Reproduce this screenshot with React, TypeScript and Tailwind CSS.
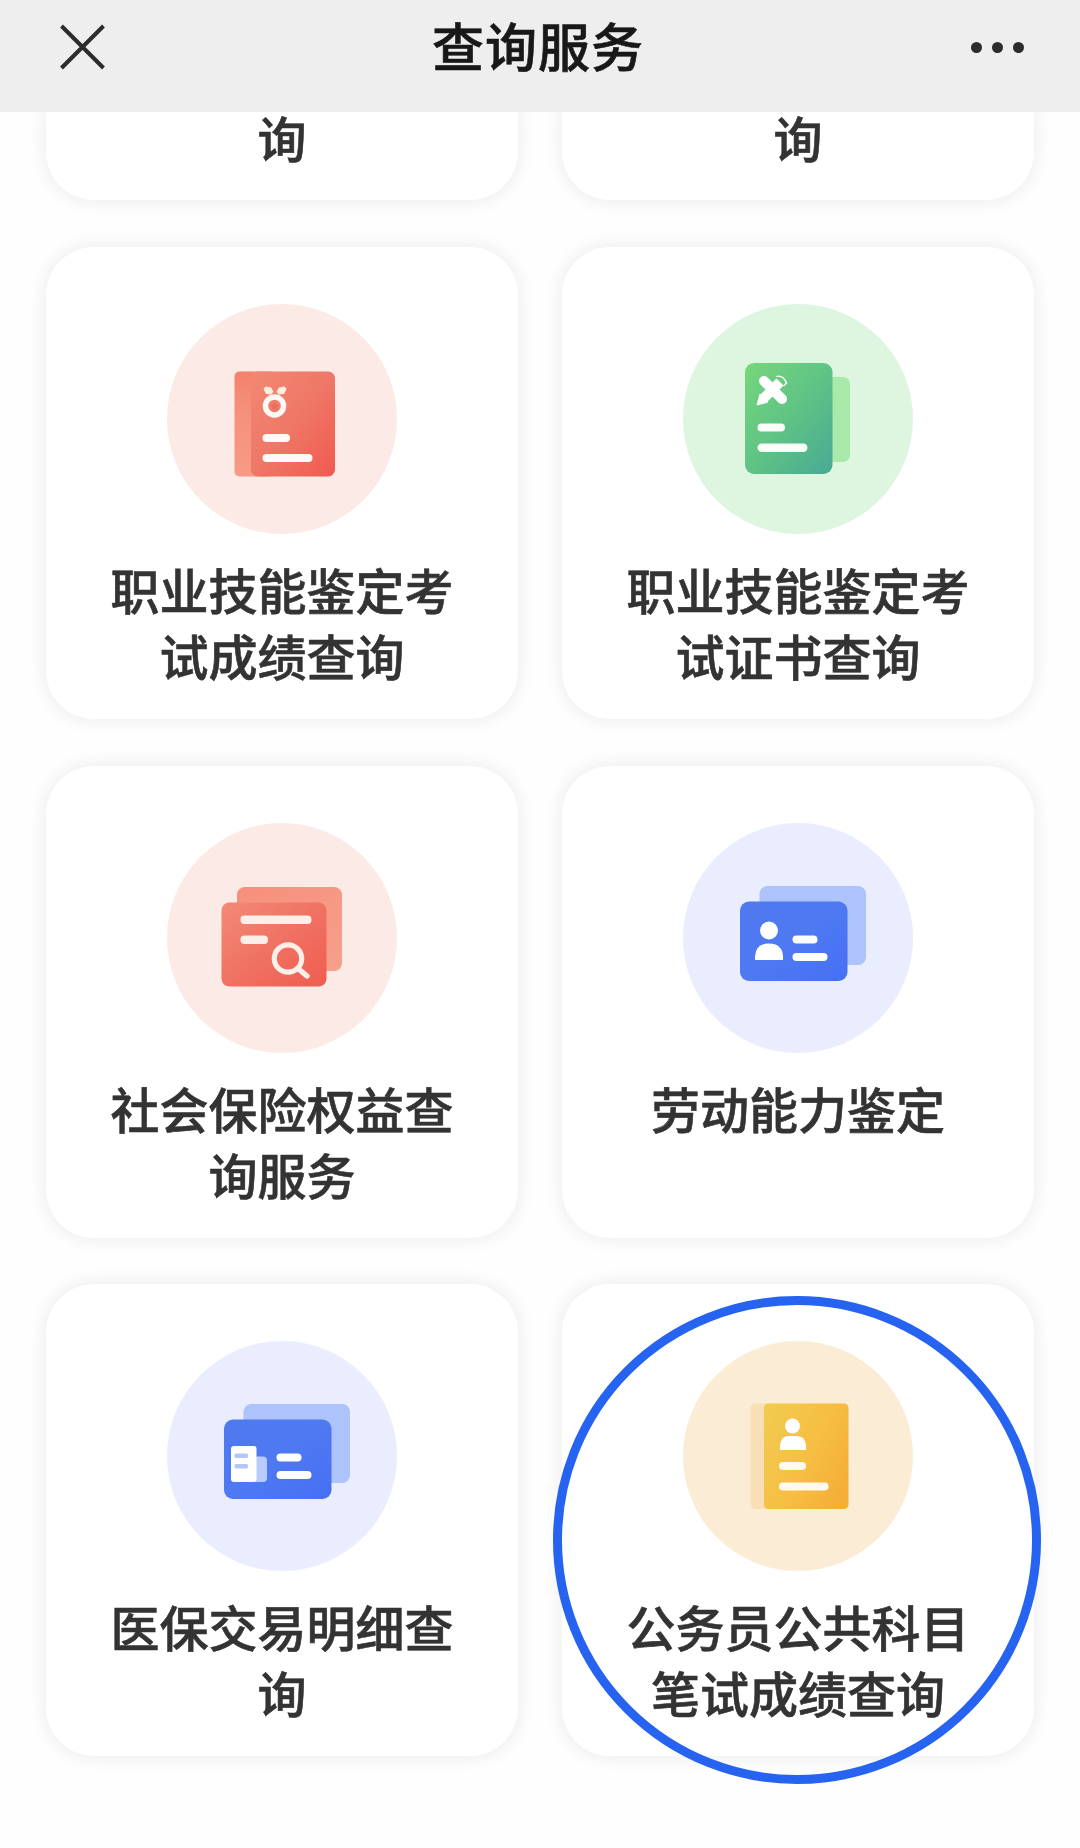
import type { ReactNode } from "react";

type Tone = "red" | "green" | "blue" | "amber";

type Service = {
  id: string;
  lines: string[];
  tone: Tone;
  icon: ReactNode;
  highlighted?: boolean;
};

const toneClass: Record<Tone, string> = {
  red: "bg-[#fbeae6]",
  green: "bg-[#def6e0]",
  blue: "bg-[#e9edfe]",
  amber: "bg-[#faecd5]",
};

function MedalBookIcon() {
  return (
    <svg viewBox="0 0 230 230" className="size-full" aria-hidden>
      <defs>
        <linearGradient id="medal-front" x1="0" y1="0" x2="1" y2="1">
          <stop offset="0" stopColor="#f28873" />
          <stop offset="0.5" stopColor="#ef7767" />
          <stop offset="1" stopColor="#f05a4e" />
        </linearGradient>
        <linearGradient id="medal-spine" x1="0" y1="0" x2="0" y2="1">
          <stop offset="0" stopColor="#f3816d" />
          <stop offset="0.4" stopColor="#f6917b" />
          <stop offset="1" stopColor="#f79a85" />
        </linearGradient>
      </defs>
      <rect x="67.5" y="67.5" width="40" height="105" rx="5" fill="url(#medal-spine)" />
      <rect x="84" y="67.5" width="84" height="105" rx="7" fill="url(#medal-front)" />
      <g fill="#fdeede">
        <path d="M96.5 85l2-2.5 5.5 1 2.5 4-2 3-5.500-.5z" />
        <path d="M119.500 85l-2-2.500-5.500 1-2.500 4 2 3 5.500-.5z" />
      </g>
      <circle cx="107.5" cy="102" r="9" fill="none" stroke="#fff8f4" strokeWidth="5.5" />
      <path
        d="M107.500 97.500l1.500 2.900 3.200.5-2.300 2.200.5 3.200-2.900-1.500-2.900 1.500.5-3.200-2.300-2.200 3.200-.5z"
        fill="#ee6a5c"
      />
      <rect x="95.5" y="130" width="27.5" height="8" rx="4" fill="#fffaf7" />
      <rect x="95.5" y="150" width="50" height="8" rx="4" fill="#fffaf7" />
    </svg>
  );
}

function CertificateIcon() {
  return (
    <svg viewBox="0 0 230 230" className="size-full" aria-hidden>
      <defs>
        <linearGradient id="cert-front" x1="0" y1="0" x2="1" y2="1">
          <stop offset="0" stopColor="#77d77b" />
          <stop offset="0.5" stopColor="#5fc385" />
          <stop offset="1" stopColor="#48a993" />
        </linearGradient>
      </defs>
      <rect x="134" y="73" width="33" height="85" rx="7" fill="#a9e9a9" />
      <rect x="62" y="59" width="87.5" height="111" rx="9" fill="url(#cert-front)" />
      <g stroke="#fff" fill="none">
        <path d="M81 77l18 18" strokeWidth="10" strokeLinecap="round" strokeLinejoin="round" />
        <path d="M97 78L80 95" strokeWidth="10" />
        <path d="M93 72.500q7-2 10.500 6.500l-3 3" strokeWidth="1.3" />
      </g>
      <path d="M77 90l-3 11 11-3z" fill="#fff" stroke="#fff" strokeLinejoin="round" />
      <rect x="74.5" y="119.5" width="27.5" height="8" rx="4" fill="#f7fff8" />
      <rect x="74.500" y="139.5" width="50" height="8.5" rx="4.2" fill="#f7fff8" />
    </svg>
  );
}

function SearchCardsIcon() {
  return (
    <svg viewBox="0 0 230 230" className="size-full" aria-hidden>
      <defs>
        <linearGradient id="search-front" x1="0" y1="0" x2="1" y2="1">
          <stop offset="0" stopColor="#f48a76" />
          <stop offset="0.5" stopColor="#ef7263" />
          <stop offset="1" stopColor="#f05c50" />
        </linearGradient>
        <linearGradient id="search-back" x1="0" y1="0" x2="1" y2="1">
          <stop offset="0" stopColor="#f68f7b" />
          <stop offset="1" stopColor="#f6a08c" />
        </linearGradient>
      </defs>
      <rect x="70" y="64" width="105" height="84" rx="8" fill="url(#search-back)" />
      <rect x="54.5" y="79.5" width="105" height="84" rx="8" fill="url(#search-front)" />
      <rect x="73.5" y="92.5" width="71" height="8.500" rx="4" fill="#fdeee7" />
      <rect x="73.5" y="112.5" width="27.5" height="8.5" rx="4" fill="#fdeee7" />
      <circle cx="121" cy="135.5" r="13.7" fill="none" stroke="#fdeee7" strokeWidth="5.2" />
      <path d="M131 145.500l9 7.500" stroke="#fdeee7" strokeWidth="5.5" strokeLinecap="round" />
    </svg>
  );
}

function CardPair() {
  return (
    <>
      <defs>
        <linearGradient id="card-front" x1="0" y1="0" x2="1" y2="1">
          <stop offset="0" stopColor="#5079ef" />
          <stop offset="0.5" stopColor="#4e79f2" />
          <stop offset="1" stopColor="#466ff4" />
        </linearGradient>
      </defs>
      <rect x="76.5" y="63" width="106.5" height="79" rx="8" fill="#aec2fb" />
      <rect x="57" y="78.5" width="107.5" height="79.5" rx="9" fill="url(#card-front)" />
      <rect x="109.5" y="112.5" width="25" height="8" rx="4" fill="#fff" />
      <rect x="109.5" y="130" width="35" height="8" rx="4" fill="#fff" />
    </>
  );
}

function IdCardIcon() {
  return (
    <svg viewBox="0 0 230 230" className="size-full" aria-hidden>
      <CardPair />
      <circle cx="86" cy="107.5" r="9" fill="#fff" />
      <path d="M72 137v-4q1-12.500 14-12.500t14 12.500v4z" fill="#fff" />
    </svg>
  );
}

function MedicalCardIcon() {
  return (
    <svg viewBox="0 0 230 230" className="size-full" aria-hidden>
      <CardPair />
      <rect x="85" y="115.5" width="15" height="25.5" rx="4" fill="#b9cafc" />
      <rect x="64" y="105" width="25.5" height="36" rx="3" fill="#fff" />
      <rect x="67.500" y="112.500" width="13.500" height="4.500" rx="1.5" fill="#b5c5fa" />
      <rect x="67.500" y="123" width="13.500" height="4.500" rx="1.5" fill="#b5c5fa" />
    </svg>
  );
}

function ExamBookIcon() {
  return (
    <svg viewBox="0 0 230 230" className="size-full" aria-hidden>
      <defs>
        <linearGradient id="exam-front" x1="0" y1="0.2" x2="1" y2="0.8">
          <stop offset="0" stopColor="#f1ca4e" />
          <stop offset="0.5" stopColor="#f6bf43" />
          <stop offset="1" stopColor="#f5ad38" />
        </linearGradient>
      </defs>
      <rect x="67.5" y="62.5" width="30" height="105.5" rx="5" fill="#f8dfb5" />
      <rect x="81" y="62.5" width="84.5" height="105.5" rx="4.5" fill="url(#exam-front)" />
      <circle cx="109.5" cy="85" r="7.5" fill="#fff" />
      <path d="M97 109v-5q1-9 9-9h7q9 0 10 9v5z" fill="#fff" />
      <rect x="96" y="121" width="27" height="8" rx="4" fill="#fffaf0" />
      <rect x="96" y="141.5" width="49.5" height="8" rx="4" fill="#fffaf0" />
    </svg>
  );
}

const services: Service[] = [
  {
    id: "skill-score",
    lines: ["职业技能鉴定考", "试成绩查询"],
    tone: "red",
    icon: <MedalBookIcon />,
  },
  {
    id: "skill-certificate",
    lines: ["职业技能鉴定考", "试证书查询"],
    tone: "green",
    icon: <CertificateIcon />,
  },
  {
    id: "social-insurance",
    lines: ["社会保险权益查", "询服务"],
    tone: "red",
    icon: <SearchCardsIcon />,
  },
  {
    id: "work-ability",
    lines: ["劳动能力鉴定"],
    tone: "blue",
    icon: <IdCardIcon />,
  },
  {
    id: "medical-transactions",
    lines: ["医保交易明细查", "询"],
    tone: "blue",
    icon: <MedicalCardIcon />,
  },
  {
    id: "civil-exam-score",
    lines: ["公务员公共科目", "笔试成绩查询"],
    tone: "amber",
    icon: <ExamBookIcon />,
    highlighted: true,
  },
];

function TopBar() {
  return (
    <header className="z-10 flex h-[112px] items-start justify-between bg-[#eeeeee] pt-6 pr-[56px] pl-[60px]">
      <button type="button" aria-label="关闭" className="flex h-[46px] w-[132px] items-center">
        <svg viewBox="0 0 46 46" className="size-[46px]" fill="none">
          <path d="M1.500 2l42 42M43.500 2l-42 42" stroke="#2c2c2c" strokeWidth="4" />
        </svg>
      </button>
      <h1 className="-mt-[2px] text-[52px] leading-[46px] font-medium tracking-[1px] text-[#181818] [-webkit-text-stroke:0.6px_#181818]">
        查询服务
      </h1>
      <button type="button" aria-label="更多" className="flex h-[46px] w-[140px] items-center justify-end gap-[10px]">
        <span className="size-[11px] rounded-full bg-[#2c2c2c]" />
        <span className="size-[11px] rounded-full bg-[#2c2c2c]" />
        <span className="size-[11px] rounded-full bg-[#2c2c2c]" />
      </button>
    </header>
  );
}

function ServiceCard({ service }: { service: Service }) {
  return (
    <div className="relative flex h-[472px] flex-col items-center rounded-[48px] bg-white pt-[57px] shadow-[0_0_16px_4px_rgba(0,0,0,0.06)]">
      <div className={`size-[230px] rounded-full ${toneClass[service.tone]}`}>
        {service.icon}
      </div>
      <div className="mt-[22px] text-center text-[49px] leading-[66px] font-medium text-[#333333] [-webkit-text-stroke:0.6px_#333333]">
        {service.lines.map((line) => (
          <p key={line}>{line}</p>
        ))}
      </div>
      {service.highlighted ? (
        <div className="absolute top-[12px] -left-[9px] size-[488px] rounded-full border-[9px] border-[#2563f0]" />
      ) : null}
    </div>
  );
}

// Bottom edge of the row that has scrolled under the top bar.
function ScrolledCard() {
  return (
    <div className="flex h-[88px] justify-center rounded-b-[48px] bg-white text-[49px] leading-[50px] font-medium text-[#333333] shadow-[0_0_16px_4px_rgba(0,0,0,0.06)] [-webkit-text-stroke:0.6px_#333333]">
      询
    </div>
  );
}

export default function App() {
  return (
    <div
      lang="zh-CN"
      className="flex h-[1848px] w-[1080px] flex-col overflow-hidden bg-[#fefefe] font-['Noto_Sans_CJK_SC',sans-serif]"
    >
      <TopBar />
      <main className="px-[46px]">
        <div className="grid grid-cols-2 gap-x-[44px]">
          <ScrolledCard />
          <ScrolledCard />
        </div>
        <div className="mt-[47px] grid grid-cols-2 gap-x-[44px] gap-y-[46.5px]">
          {services.map((service) => (
            <ServiceCard key={service.id} service={service} />
          ))}
        </div>
      </main>
    </div>
  );
}
